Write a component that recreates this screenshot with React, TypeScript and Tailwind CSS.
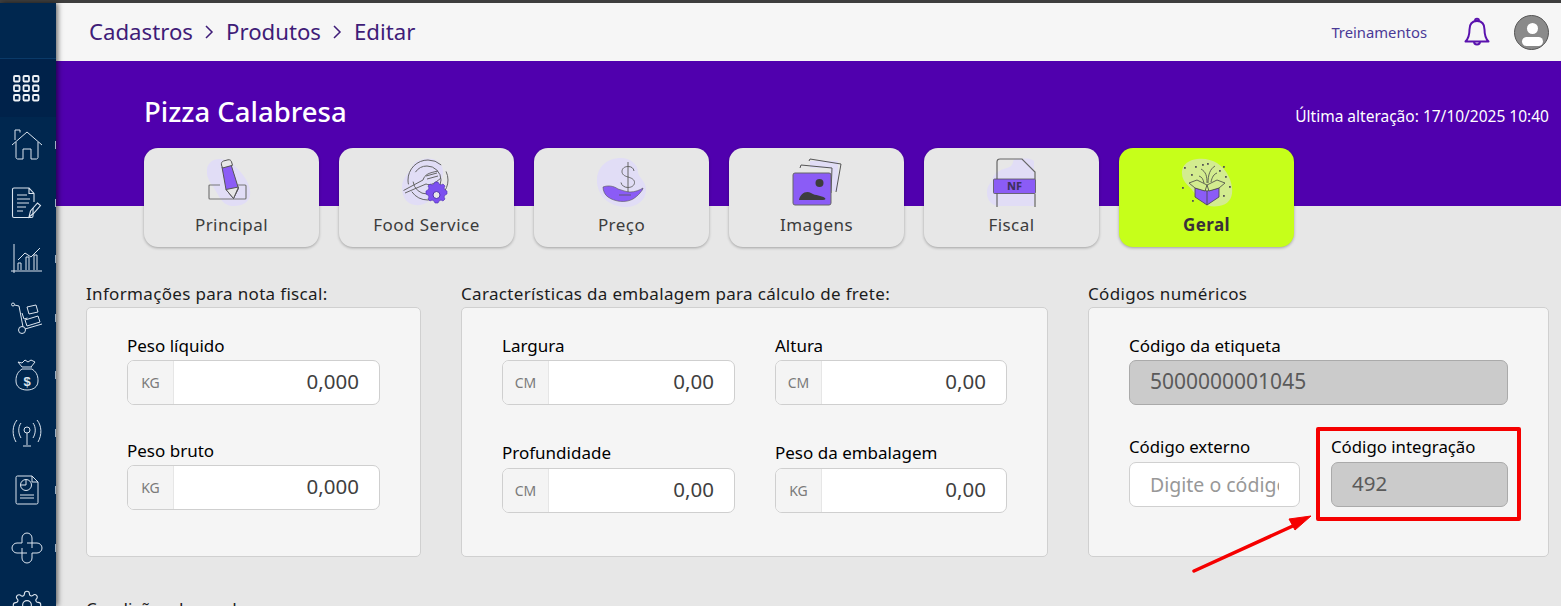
import React from "react";

const F = "font-['Noto_Sans','Open_Sans',sans-serif]";

function SideIcon({ children, h, mark }: { children: React.ReactNode; h: string; mark?: boolean }) {
  return (
    <div className={`relative shrink-0 flex items-center justify-center pr-[2px] text-[#dbe4ee] ${h}`}>
      {children}
      {mark !== false && <span className="absolute right-0 top-1/2 -translate-y-1/2 w-[1px] h-[8px] bg-[#9fb0c2]" />}
    </div>
  );
}

const Sidebar = () => (
  <aside className="w-[56px] shrink-0 h-full bg-[#00274f] flex flex-col shadow-[2px_0_5px_rgba(0,0,0,0.55)] z-10 overflow-hidden">
    <div className="h-[56px] shrink-0 border-b border-[#0a3a68]" />
    <div className="h-[58px] shrink-0 bg-[#00224a] flex items-center justify-center pr-[4px]">
      <svg width="27" height="27" viewBox="0 0 27 27" fill="none" stroke="#eef2f6" strokeWidth="1.800">
        {[1, 10.500, 20].flatMap((y) => [1, 10.500, 20].map((x) => <rect key={`${x}-${y}`} x={x} y={y} width="5.500" height="5.500" rx="1" />))}
      </svg>
    </div>
    <SideIcon h="h-[56px]">
      <svg width="32" height="32" viewBox="0 0 32 32" fill="none" stroke="currentColor" strokeWidth="1">
        <path d="M1 16 16 3l15 13M5 13v15.500a2 2 0 0 0 1.500 1.500H12V20h8v10h5.500a2 2 0 0 0 1.500-1.500V13M4 11V1h5v2.500" />
      </svg>
    </SideIcon>
    <SideIcon h="h-[60px]">
      <svg width="32" height="32" viewBox="0 0 32 32" fill="none" stroke="currentColor" strokeWidth="1.100">
        <path d="M22 21v8a1.500 1.500 0 0 1-1.500 1.500H3A1.500 1.500 0 0 1 1.500 29V2.500A1.500 1.500 0 0 1 3 1h15l5 5.500V15M18 1v5.500h5M6 8h10M6 12h13M6 16h12M6 20h9M6 24h6" />
        <path d="M18 30l1.500-6 7-8 3 2.500-7 8z" />
      </svg>
    </SideIcon>
    <SideIcon h="h-[52px]">
      <svg width="32" height="30" viewBox="0 0 32 30" fill="none" stroke="currentColor" strokeWidth="1">
        <path d="M3 0v29M0 27h31M7 16l7-7 6 4 9-9M7 26v-7h3v7M15 26V13h3v13M23 26V11h3v15" />
      </svg>
    </SideIcon>
    <SideIcon h="h-[66px]">
      <svg width="32" height="32" viewBox="0 0 32 32" fill="none" stroke="currentColor" strokeWidth="1">
        <circle cx="2" cy="2.500" r="1.500" />
        <circle cx="11" cy="28" r="3.500" />
        <path d="M3.500 3 8 4l4 21M14 27l17-5M11 11l2 6 3.500-1M16 5l9-2 2 7-9 2zM14 18l13-4 2 6-13 4z" />
      </svg>
    </SideIcon>
    <SideIcon h="h-[48px]">
      <svg width="24" height="32" viewBox="0 0 24 32" fill="none" stroke="currentColor" strokeWidth="1">
        <path d="M7 8 3 3l4 1 3-3 3 2 3-2 4 2-4 5M7 8h10M7 10C1 14 1 19 1 22c0 6 5 9 11 9s11-3 11-9c0-3 0-8-6-12z" />
        <text x="12" y="27" fontSize="13" fontWeight="700" textAnchor="middle" fill="currentColor" stroke="none" fontFamily="'Liberation Sans',sans-serif">$</text>
      </svg>
    </SideIcon>
    <SideIcon h="h-[68px]">
      <svg width="32" height="28" viewBox="0 0 32 28" fill="none" stroke="currentColor" strokeWidth="1">
        <circle cx="16" cy="11" r="3" />
        <path d="M16 14v12M12 27h8M10 4c-3 4-3 10 0 15M22 4c3 4 3 10 0 15M6 1C1 7 1 16 5 23M26 1c5 6 5 15 1 22" />
      </svg>
    </SideIcon>
    <SideIcon h="h-[46px]">
      <svg width="24" height="30" viewBox="0 0 24 30" fill="none" stroke="currentColor" strokeWidth="1">
        <path d="M17 1H2.500A1.500 1.500 0 0 0 1 2.500v25A1.500 1.500 0 0 0 2.500 29h19a1.500 1.500 0 0 0 1.500-1.500V7zM17 1v6h6M5 20h14M5 23h14" />
        <circle cx="11" cy="10" r="5.500" />
        <path d="M11 10V4.500M11 10H5.500" />
      </svg>
    </SideIcon>
    <SideIcon h="h-[70px]">
      <svg width="32" height="32" viewBox="0 0 32 32" fill="none" stroke="currentColor" strokeWidth="1">
        <path d="M11 11H6a5 5 0 0 0 0 10h10M11 11V6a5 5 0 0 1 10 0v10M16 11h10a5 5 0 0 1 0 10h-5M21 21v5a5 5 0 0 1-10 0V16" />
      </svg>
    </SideIcon>
    <SideIcon h="h-[44px]" mark={false}>
      <svg width="30" height="30" viewBox="0 0 24 24" fill="none" stroke="currentColor" strokeWidth="0.900">
        <circle cx="12" cy="12" r="3.500" />
        <path d="M19.400 15a1.650 1.650 0 0 0 .33 1.820l.06.06a2 2 0 1 1-2.830 2.830l-.06-.06a1.650 1.650 0 0 0-2.820 1.170V21a2 2 0 0 1-4 0v-.09a1.650 1.650 0 0 0-2.800-1.200l-.06.06a2 2 0 1 1-2.830-2.830l.06-.06a1.650 1.650 0 0 0-1.170-2.820H3a2 2 0 0 1 0-4h.09a1.650 1.650 0 0 0 1.200-2.800l-.06-.06a2 2 0 1 1 2.830-2.830l.06.06a1.650 1.650 0 0 0 2.820-1.170V3a2 2 0 0 1 4 0v.09a1.650 1.650 0 0 0 2.800 1.200l.06-.06a2 2 0 1 1 2.830 2.830l-.06.06a1.650 1.650 0 0 0 1.170 2.820H21a2 2 0 0 1 0 4h-.09a1.650 1.650 0 0 0-1.510 1.060z" />
      </svg>
    </SideIcon>
  </aside>
);

const Blob = ({ d }: { d: string }) => <path d={d} fill="#e1ddf6" />;

const icons: Record<string, React.ReactNode> = {
  Principal: (
    <svg width="50" height="50" viewBox="0 0 50 50" fill="none">
      <Blob d="M5 3c8-5 20-1 31 14 12 16 9 30-8 31C14 49 12 36 5 27-3 16-1 7 5 3z" />
      <path d="M13 27H3q-1 0-1 1v12q0 1 1 1h35q1 0 1-1V28q0-1-1-1h-7" stroke="#777" strokeWidth="1.200" />
      <path d="M15 9 24 6.500l7.500 24-5 10-7.500-9z" fill="#8b5cf6" stroke="#555" strokeWidth="1" />
      <path d="M14.500 7c-.5-2 .5-3.500 2-4l4.500-1.200c2-.3 3 .5 3.500 2l1 3.500-10 2.700z" fill="#e7e7e7" stroke="#555" strokeWidth="1" />
      <path d="M19 31.500l12.500-2.500-5 11.500z" fill="#e7e7e7" stroke="#555" strokeWidth="1" />
    </svg>
  ),
  "Food Service": (
    <svg width="50" height="50" viewBox="0 0 50 50" fill="none">
      <Blob d="M22 1c9-2 18 2 19 12s-7 14-9 22-10 13-19 12S0 38 0 29s7-14 10-20S15 3 22 1z" />
      <circle cx="26" cy="22" r="20" stroke="#666" strokeWidth="1" strokeDasharray="50 8" />
      <circle cx="25" cy="22" r="14" stroke="#666" strokeWidth="1" strokeDasharray="42 10" />
      <path d="M1.500 32.500 21 22c2-6 6-7 15-9M3 35l21-9c5 2 9-1 15-6M24 18l11-3M25 21l11-3" stroke="#666" strokeWidth="1" />
      <path d="m30 31 2-1 1-2h3l1 2 2 1 2-1 2 2-1 2 1 2 2 1v3l-2 1-1 2 1 2-2 2-2-1-2 1-1 2h-3l-1-2-2-1-2 1-2-2 1-2-1-2-2-1v-3l2-1 1-2-1-2 2-2z" transform="translate(0 -4)" fill="#7c4ff0" stroke="#4c2db0" strokeWidth=".6" />
      <circle cx="34.500" cy="37" r="3.500" fill="#e7e7e7" stroke="#4c2db0" />
    </svg>
  ),
  Preço: (
    <svg width="50" height="50" viewBox="0 0 50 50" fill="none">
      <Blob d="M24 0c10 0 17 7 17 14 0 5 8 9 8 18 0 10-9 17-20 17C14 49 2 40 0 25-1 10 9 0 24 0z" />
      <path d="M37 13c-.5-3-2.500-4.500-6-4.500s-6 2-6 5 2.500 4.500 6 5.500 6.500 2.500 6.500 5.500-3 5-6.500 5-6.500-2-7-5M31 4v31" stroke="#666" strokeWidth="1" />
      <path d="M6 29c5-2 11-1 15 2 4 1 8 3 12 3 5 0 10-2 13-4 0 2-5 8-10 11-7 4-18 3-25-2-3-2-5-6-5-10z" fill="#8b5cf6" stroke="#555" strokeWidth=".6" />
      <path d="M22 37h12" stroke="#555" strokeWidth=".8" />
    </svg>
  ),
  Imagens: (
    <svg width="50" height="50" viewBox="0 0 50 50" fill="none">
      <Blob d="M18 3h28v30H38V10H18z" />
      <path d="M17 3 18 1l31 5-5 28" stroke="#555" strokeWidth="1" />
      <path d="M8 10 9 7l31 3-1 25" stroke="#555" strokeWidth="1" />
      <rect x="1" y="15" width="38" height="32" rx="2" fill="#8b5cf6" stroke="#666" strokeWidth="1" />
      <circle cx="27.500" cy="25" r="4" fill="#3d3d3d" />
      <path d="M7 42c1-6 7-10 12-7 5 3 10 2 14 5 1 1 0 2-2 2z" fill="#3d3d3d" />
    </svg>
  ),
  Fiscal: (
    <svg width="50" height="50" viewBox="0 0 50 50" fill="none">
      <Blob d="M28 1c8 0 14-2 19 2v45H10C2 46 0 40 0 34c0-7 5-10 6-14s6-8 14-10 5-9 8-9z" />
      <path d="M10 49V4q0-3 3-3h22l13 13v7M10 36v13M48 36v13" stroke="#666" strokeWidth="1.200" />
      <rect x="6.500" y="21" width="42" height="14.500" rx="1" fill="#8b5cf6" stroke="#555" strokeWidth=".8" />
      <text x="27.500" y="32" fontSize="11" fontWeight="800" fill="#403060" textAnchor="middle" fontFamily="'Noto Sans',sans-serif">NF</text>
    </svg>
  ),
  Geral: (
    <svg width="52" height="50" viewBox="0 0 52 50" fill="none">
      <path d="M16 1c12-2 26 4 32 18s4 27-10 29c-12 2-20-4-24-12S0 25 1 13C2 6 8 2 16 1z" fill="#d3ec8f" />
      <path d="M14 30v9l12 8 12-8v-9l-12 3z" fill="#8b5cf6" stroke="#444" strokeWidth=".8" />
      <path d="M26 33v14M14 30l-6-5 8-3 10 5-2 6zM38 30l6-5-8-3-10 5 2 6z" fill="#d3ec8f" stroke="#444" strokeWidth=".8" />
      <path d="M26 25c0-7-1-11-6-14M27 25c0-8 2-14 7-17M30 24c1-5 3-8 6-9M23 25c-1-4-2-6-5-7" stroke="#444" strokeWidth=".8" />
      {[[14,8],[21,6],[10,16],[26,5],[38,12],[42,8],[3,9],[44,18],[48,28],[1,29],[42,37],[11,42]].map(([x,y],i)=>(<rect key={i} x={x} y={y} width="1.800" height="1.800" fill="#555" />))}
    </svg>
  ),
};

function Tab({ name, active }: { name: string; active?: boolean }) {
  return (
    <div
      className={`w-[175px] h-[99px] rounded-[14px] flex flex-col items-center shadow-[0_1px_3px_rgba(0,0,0,0.3)] ${
        active ? "bg-[#c6ff1a]" : "bg-[#e7e7e7]"
      }`}
    >
      <div className="h-[50px] mt-[10px] flex items-center justify-center">{icons[name]}</div>
      <span className={`mt-[5px] text-[17px] leading-[24px] tracking-[0.45px] ${active ? "font-bold text-[#3a2f3a]" : "text-[#3c3c3c]"}`}>{name}</span>
    </div>
  );
}

function Field({ label, unit, value, w, low }: { label: string; unit: string; value: string; w: string; low?: boolean }) {
  return (
    <div className={w}>
      <div className="text-[17px] leading-[22px] text-black">{label}</div>
      <div className={`${low ? "mt-[4px]" : "mt-[3px]"} h-[45px] bg-white border border-[#cfcfcf] rounded-[7px] flex overflow-hidden`}>
        <div className="w-[46px] bg-[#f4f4f4] border-r border-[#e6e6e6] flex items-center justify-center text-[14px] text-[#7a7a7a]">{unit}</div>
        <div className="flex-1 flex items-center justify-end pr-[20px] pb-[2px] text-[20.500px] text-[#3f3f3f]">{value}</div>
      </div>
    </div>
  );
}

const Panel = ({ title, className, children }: { title: string; className: string; children: React.ReactNode }) => (
  <section className={className}>
    <h3 className="text-[17px] leading-[22px] text-[#1c1c1c] tracking-[0.33px]">{title}</h3>
    <div className="mt-[2px] h-[250px] bg-[#f5f5f5] border border-[#d0d0d0] rounded-[5px] px-[40px] pt-[27px]">{children}</div>
  </section>
);

const Chevron = () => (
  <svg className="mx-[11.500px]" width="10" height="16" viewBox="0 0 10 16" fill="none" stroke="#3f1c78" strokeWidth="1.500"><path d="m2 2 6 6-6 6" /></svg>
);

export default function App() {
  return (
    <div className={`${F} relative w-[1561px] h-[606px] overflow-hidden bg-[#e7e7e7] flex flex-col`}>
      <div className="h-[3px] shrink-0 bg-[#3e3e3e]" />
      <div className="flex flex-1 min-h-0">
        <Sidebar />
        <main className="flex-1 min-w-0 flex flex-col">
          <header className="h-[58px] shrink-0 bg-[#f6f6f6] flex items-center pl-[33px] pr-[12px] text-[#3f1c78]">
            <nav className="flex items-center text-[22.200px]">
              <span>Cadastros</span>
              <Chevron />
              <span>Produtos</span>
              <Chevron />
              <span>Editar</span>
            </nav>
            <span className="ml-auto text-[14.800px] text-[#4a3a96]">Treinamentos</span>
            <svg className="ml-[36px]" width="28" height="30" viewBox="0 0 28 30" fill="none" stroke="#5a12ae" strokeWidth="2" strokeLinejoin="round">
              <path d="M14 4C8.500 4 6.500 8 6.500 12.500c0 6-1 9-4 12h23c-3-3-4-6-4-12C21.500 8 19.500 4 14 4zM12 4c0-3 4-3 4 0M11 24.500c0 4 6 4 6 0" />
            </svg>
            <div className="ml-[23px] w-[35px] h-[35px] rounded-full bg-[#8a8a8a] border border-[#555] relative overflow-hidden">
              <div className="absolute left-[11.500px] top-[7px] w-[11px] h-[11px] rounded-full bg-white" />
              <div className="absolute left-[7px] top-[21px] w-[21px] h-[9px] rounded-[5px] bg-white" />
            </div>
          </header>
          <div className="h-[145px] shrink-0 bg-[#5000ae] pl-[88px] pr-[12px] relative">
            <div className="flex items-start justify-between text-white">
              <h1 className="mt-[32px] text-[27.500px] leading-[38px] font-medium">Pizza Calabresa</h1>
              <span className="mt-[44px] text-[15.500px] leading-[22px]">Última alteração: 17/10/2025 10:40</span>
            </div>
            <div className="absolute left-[88px] top-[87px] flex gap-[20px]">
              {["Principal", "Food Service", "Preço", "Imagens", "Fiscal"].map((n) => (
                <Tab key={n} name={n} />
              ))}
              <Tab name="Geral" active />
            </div>
          </div>
          <div className="pl-[30px] pr-[12px] pt-[77px] flex">
            <Panel title="Informações para nota fiscal:" className="w-[335px]">
              <Field w="w-[253px]" label="Peso líquido" unit="KG" value="0,000" />
              <div className="h-[35px]" />
              <Field w="w-[253px]" label="Peso bruto" unit="KG" value="0,000" />
            </Panel>
            <Panel title="Características da embalagem para cálculo de frete:" className="ml-[40px] w-[587px]">
              <div className="grid grid-cols-[233px_232px] gap-x-[40px] gap-y-[37px]">
                <Field w="" label="Largura" unit="CM" value="0,00" />
                <Field w="" label="Altura" unit="CM" value="0,00" />
                <Field w="" low label="Profundidade" unit="CM" value="0,00" />
                <Field w="" low label="Peso da embalagem" unit="KG" value="0,00" />
              </div>
            </Panel>
            <Panel title="Códigos numéricos" className="ml-[40px] w-[461px]">
              <div className="text-[17px] leading-[22px] text-black">Código da etiqueta</div>
              <div className="mt-[3px] w-[379px] h-[45px] bg-[#cbcbcb] border border-[#aaaaaa] rounded-[7px] flex items-center pl-[20px] pb-[2px] text-[21px] text-[#5a5a5a]">5000000001045</div>
              <div className="mt-[31px] flex gap-[30px]">
                <div className="w-[171px]">
                  <div className="text-[16.800px] leading-[22px] text-black">Código externo</div>
                  <div className="mt-[4px] h-[45px] bg-white border border-[#d0d0d0] rounded-[7px] flex items-center pl-[20px] pr-[20px] overflow-hidden text-[19.500px] text-[#989898] whitespace-nowrap"><span className="block w-full overflow-hidden">Digite o código</span></div>
                </div>
                <div className="w-[177px] ml-[1px]">
                  <div className="text-[16.800px] leading-[22px] text-black">Código integração</div>
                  <div className="mt-[4px] h-[45px] bg-[#cbcbcb] border border-[#aaaaaa] rounded-[7px] flex items-center pl-[20px] pb-[2px] text-[20.500px] text-[#5a5a5a]">492</div>
                </div>
              </div>
            </Panel>
          </div>
          <div className="pl-[30px] mt-[41px] text-[17px] leading-[22px] text-[#1c1c1c]">Condições de venda</div>
        </main>
      </div>
      {/* Annotation drawn over the screenshot */}
      <div className="absolute left-[1316px] top-[427px] w-[205px] h-[94px] border-[4px] border-[#f50000] rounded-[2px]" />
      <svg className="absolute left-[1190px] top-[510px]" width="130" height="65" viewBox="0 0 130 65" fill="none">
        <path d="M4 61 105 15" stroke="#f50000" strokeWidth="3.500" strokeLinecap="round" />
        <path d="M121 6 99 9l6 11z" fill="#f50000" stroke="#f50000" />
      </svg>
    </div>
  );
}
